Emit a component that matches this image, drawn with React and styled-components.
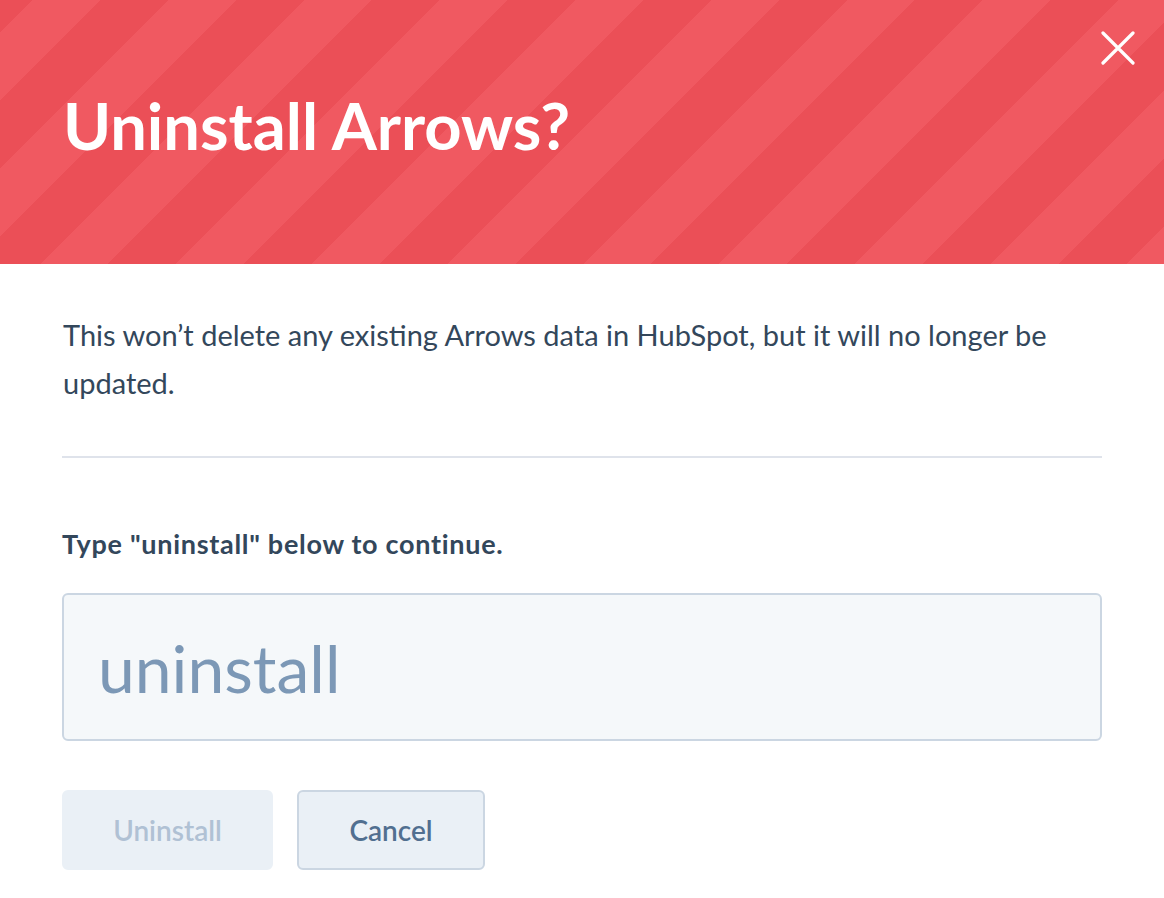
import React, { useState } from 'react';
import styled, { createGlobalStyle } from 'styled-components';

const GlobalStyle = createGlobalStyle`
  html, body {
    margin: 0;
    padding: 0;
    background: #ffffff;
  }
  body {
    font-family: Lato, "Open Sans", "Liberation Sans", sans-serif;
    color: #33475b;
  }
  * {
    box-sizing: border-box;
  }
`;

const Modal = styled.div`
  width: 1164px;
  min-height: 898px;
  background: #ffffff;
  display: flex;
  flex-direction: column;
`;

const Header = styled.header`
  position: relative;
  height: 264px;
  padding: 0 62px;
  display: flex;
  align-items: center;
  background-color: #ee545c;
  background-image: repeating-linear-gradient(
    135deg,
    #eb4f57 0px,
    #eb4f57 23px,
    #f05961 23px,
    #f05961 71px,
    #eb4f57 71px,
    #eb4f57 96px
  );
`;

const Title = styled.h1`
  margin: 0 0 14px 1px;
  font-size: 65px;
  font-weight: 700;
  color: #ffffff;
`;

const CloseButton = styled.button`
  position: absolute;
  top: 28px;
  right: 26px;
  width: 40px;
  height: 40px;
  padding: 0;
  border: none;
  background: transparent;
  cursor: pointer;
  display: flex;
  align-items: center;
  justify-content: center;
`;

const Body = styled.div`
  padding: 47px 62px 28px;
  display: flex;
  flex-direction: column;
`;

const Message = styled.p`
  margin: 0 0 0 1px;
  font-size: 29px;
  line-height: 48px;
  color: #33475b;
`;

const Divider = styled.hr`
  margin: 49px 0 0;
  border: none;
  height: 2px;
  background: #dfe3eb;
`;

const Label = styled.label`
  margin-top: 68px;
  font-size: 27px;
  font-weight: 700;
  line-height: 36px;
  letter-spacing: 0.7px;
  color: #33475b;
`;

const Input = styled.input`
  margin-top: 31px;
  height: 148px;
  width: 100%;
  padding: 0 34px;
  border: 2px solid #cbd6e2;
  border-radius: 6px;
  background: #f5f8fa;
  font-family: inherit;
  font-size: 66px;
  color: #7c98b6;
  outline: none;
`;

const Actions = styled.div`
  margin-top: 49px;
  display: flex;
  gap: 24px;
`;

const Button = styled.button`
  height: 80px;
  width: ${(p) => p.$width}px;
  border-radius: 6px;
  font-family: inherit;
  font-size: 28px;
  font-weight: 600;
  background: #eaf0f6;
  border: 2px solid ${(p) => (p.$bordered ? '#cbd6e2' : '#eaf0f6')};
  color: ${(p) => (p.disabled ? '#b0c1d4' : '#516f90')};
  cursor: ${(p) => (p.disabled ? 'not-allowed' : 'pointer')};
`;

export default function App() {
  const [value, setValue] = useState('uninstall');

  return (
    <Modal>
      <GlobalStyle />
      <Header>
        <Title>Uninstall Arrows?</Title>
        <CloseButton aria-label="Close">
          <svg width="34" height="34" viewBox="0 0 34 34">
            <path d="M2 2 L32 32 M32 2 L2 32" stroke="#ffffff" strokeWidth="3.2" strokeLinecap="round" />
          </svg>
        </CloseButton>
      </Header>
      <Body>
        <Message>
          This won’t delete any existing Arrows data in HubSpot, but it will no longer be updated.
        </Message>
        <Divider />
        <Label htmlFor="confirm">Type "uninstall" below to continue.</Label>
        <Input id="confirm" value={value} onChange={(e) => setValue(e.target.value)} />
        <Actions>
          <Button $width={211} disabled>Uninstall</Button>
          <Button $width={188} $bordered>Cancel</Button>
        </Actions>
      </Body>
    </Modal>
  );
}
